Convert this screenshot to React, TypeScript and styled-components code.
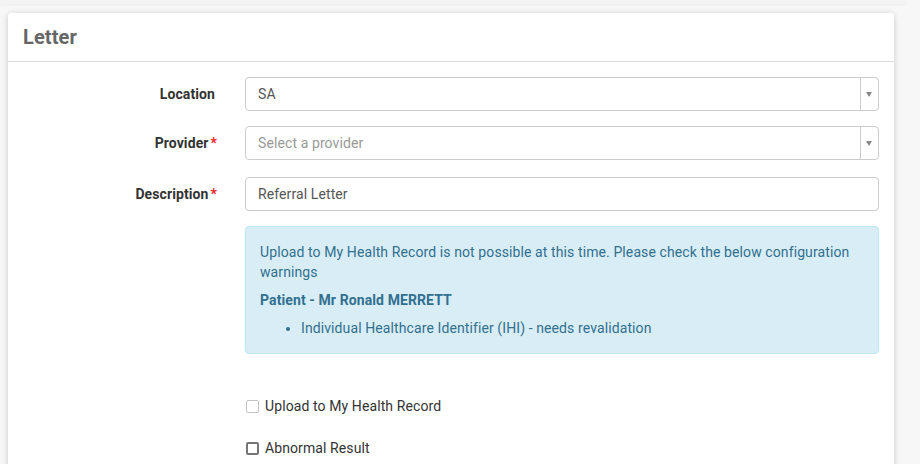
import styled, { createGlobalStyle } from 'styled-components';

const GlobalStyle = createGlobalStyle`
  body {
    margin: 0;
    background: #f7f7f7;
    font-family: Roboto, "Liberation Sans", Arial, sans-serif;
    font-size: 14px;
    letter-spacing: 0.1px;
    color: #333;
  }
`;

const App = () => {
  return (
    <Page>
      <GlobalStyle />
      <PrevEdge />
      <Panel>
        <Header>
          <Title>Letter</Title>
        </Header>
        <Body>
          <Label>Location</Label>
          <Select>
            <SelectValue>SA</SelectValue>
            <Caret />
          </Select>

          <Label $gap={15}>
            Provider<Star>*</Star>
          </Label>
          <Select $gap={15}>
            <SelectValue $placeholder>Select a provider</SelectValue>
            <Caret />
          </Select>

          <Label $gap={17}>
            Description<Star>*</Star>
          </Label>
          <Input $gap={17} defaultValue="Referral Letter" />

          <span />
          <Alert>
            <AlertText>
              Upload to My Health Record is not possible at this time. Please check the below configuration
              warnings
            </AlertText>
            <AlertTitle>Patient - Mr Ronald MERRETT</AlertTitle>
            <AlertList>
              <li>Individual Healthcare Identifier (IHI) - needs revalidation</li>
            </AlertList>
          </Alert>

          <span />
          <CheckRow $gap={42}>
            <Box $disabled />
            Upload to My Health Record
          </CheckRow>

          <span />
          <CheckRow $gap={22}>
            <Box />
            Abnormal Result
          </CheckRow>
        </Body>
      </Panel>
    </Page>
  );
};

export default App;

const Page = styled.div`
  padding: 0 26px 0 8px;
  height: 464px;
  overflow: hidden;
`;

const PrevEdge = styled.div`
  height: 4px;
  margin: 0 -12px 9px -8px;
  background: #f4f4f4;
  box-shadow: 0 1px 3px rgba(0, 0, 0, 0.04);
`;

const Panel = styled.div`
  width: 886px;
  background: #fff;
  border-radius: 3px 3px 0 0;
  box-shadow: 0 1px 6px rgba(0, 0, 0, 0.18);
  min-height: 500px;
`;

const Header = styled.div`
  height: 48px;
  border-bottom: 1px solid #ddd;
  padding: 0 15px;
  display: flex;
  align-items: center;
`;

const Title = styled.h3`
  margin: 0;
  font-size: 20px;
  font-weight: 700;
  color: #666;
`;

const Body = styled.div`
  display: grid;
  grid-template-columns: 207px 634px;
  column-gap: 30px;
  padding: 15px 15px 0 0;
`;

const Label = styled.label<{ $gap?: number }>`
  margin-top: ${(p) => p.$gap ?? 0}px;
  height: 34px;
  display: flex;
  align-items: center;
  justify-content: flex-end;
  font-weight: 700;
  color: #333;
`;

const Star = styled.span`
  color: #e22;
  margin-left: 2px;
  margin-right: -2px;
`;

const Select = styled.div<{ $gap?: number }>`
  margin-top: ${(p) => p.$gap ?? 0}px;
  height: 34px;
  box-sizing: border-box;
  border: 1px solid #ccc;
  border-radius: 4px;
  display: flex;
  align-items: stretch;
`;

const SelectValue = styled.div<{ $placeholder?: boolean }>`
  flex: 1;
  display: flex;
  align-items: center;
  padding-left: 12px;
  color: ${(p) => (p.$placeholder ? '#999' : '#555')};
`;

const Caret = styled.div`
  width: 17px;
  border-left: 1px solid #ccc;
  position: relative;
  &::after {
    content: '';
    position: absolute;
    left: 5px;
    top: 14px;
    border-left: 3.5px solid transparent;
    border-right: 3.5px solid transparent;
    border-top: 5px solid #888;
  }
`;

const Input = styled.input<{ $gap?: number }>`
  margin-top: ${(p) => p.$gap ?? 0}px;
  height: 34px;
  box-sizing: border-box;
  border: 1px solid #ccc;
  border-radius: 4px;
  padding: 0 12px;
  font: inherit;
  letter-spacing: inherit;
  color: #555;
  outline: none;
`;

const Alert = styled.div`
  margin-top: 15px;
  background: #d9edf7;
  border: 1px solid #bce8f1;
  border-radius: 4px;
  padding: 15px 14px;
  color: #31708f;
  line-height: 20px;
`;

const AlertText = styled.p`
  margin: 0 0 8px;
`;

const AlertTitle = styled.div`
  font-weight: 700;
  margin-bottom: 8px;
`;

const AlertList = styled.ul`
  margin: 0;
  padding-left: 41px;
`;

const CheckRow = styled.label<{ $gap: number }>`
  margin-top: ${(p) => p.$gap}px;
  display: flex;
  align-items: center;
  gap: 6px;
  height: 20px;
  color: #333;
`;

const Box = styled.span<{ $disabled?: boolean }>`
  width: 13px;
  height: 13px;
  box-sizing: border-box;
  margin-left: 1px;
  border-radius: 2px;
  border: ${(p) => (p.$disabled ? '1px solid #c4c4c4' : '2px solid #767676')};
  background: #fff;
`;
